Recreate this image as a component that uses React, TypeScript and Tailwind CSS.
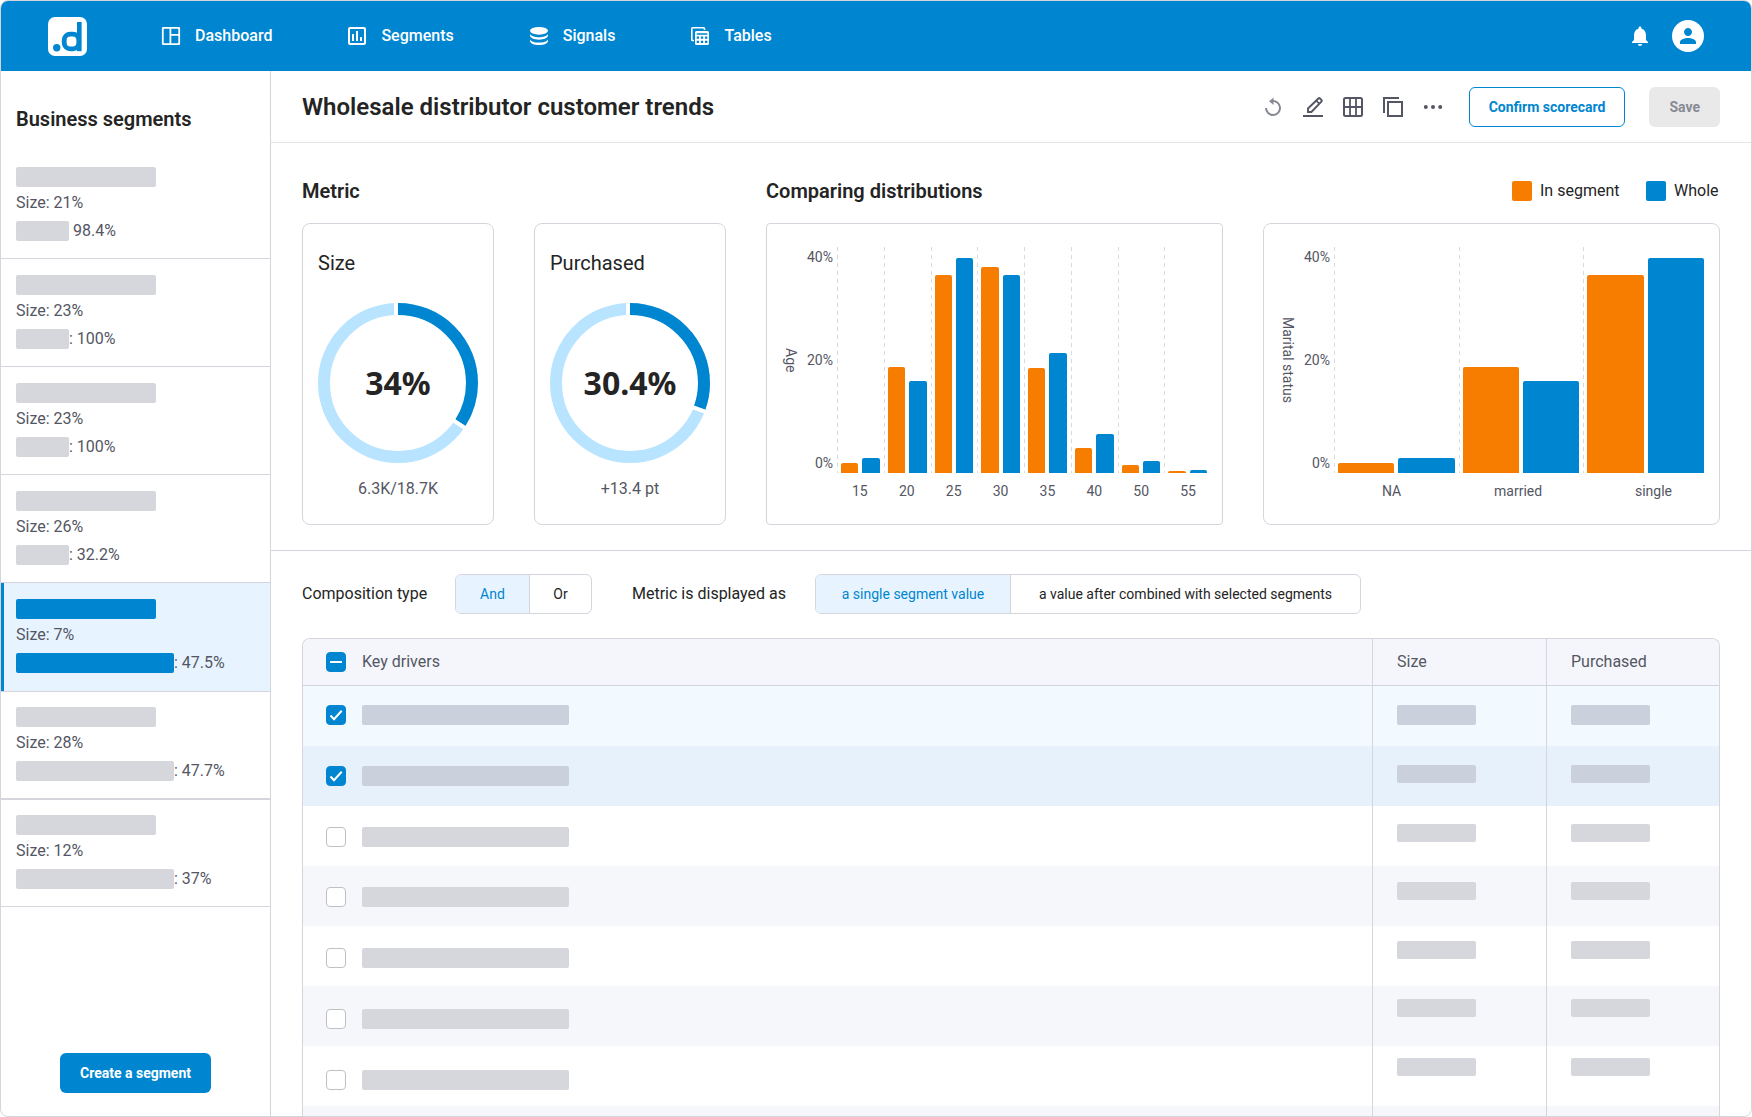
import { useState } from "react";
import type { ReactNode } from "react";
import clsx from "clsx";
import {
  MdNotifications,
  MdOutlineAssessment,
  MdPerson,
} from "react-icons/md";

interface SegmentInterface {
  size: string;
  value: string;
  wide: boolean;
  selected?: boolean;
  divider: string;
}

interface BarInterface {
  label: string;
  segment: number;
  whole: number;
}

interface OptionInterface {
  label: string;
  width: string;
}

interface DriverInterface {
  id: number;
  checked: boolean;
  nameTop: number;
  valueTop: number;
}

const segments: SegmentInterface[] = [
  { size: "21%", value: "98.4%", wide: false, divider: "border-b pt-4" },
  { size: "23%", value: ": 100%", wide: false, divider: "border-b pt-4" },
  { size: "23%", value: ": 100%", wide: false, divider: "border-b pt-4" },
  { size: "26%", value: ": 32.2%", wide: false, divider: "border-b pt-4" },
  { size: "7%", value: ": 47.5%", wide: true, selected: true, divider: "pt-4" },
  { size: "28%", value: ": 47.7%", wide: true, divider: "border-y pt-[15px]" },
  { size: "12%", value: ": 37%", wide: true, divider: "border-y pt-[15px]" },
];

// bar heights in pixels
const ageBars: BarInterface[] = [
  { label: "15", segment: 10, whole: 15 },
  { label: "20", segment: 106, whole: 92 },
  { label: "25", segment: 198, whole: 215 },
  { label: "30", segment: 206, whole: 198 },
  { label: "35", segment: 105, whole: 120 },
  { label: "40", segment: 25, whole: 39 },
  { label: "50", segment: 8, whole: 12 },
  { label: "55", segment: 2, whole: 3 },
];

const maritalBars: BarInterface[] = [
  { label: "NA", segment: 10, whole: 15 },
  { label: "married", segment: 106, whole: 92 },
  { label: "single", segment: 198, whole: 215 },
];

const compositionOptions: OptionInterface[] = [
  { label: "And", width: "w-[74px]" },
  { label: "Or", width: "w-[61px]" },
];

const displayOptions: OptionInterface[] = [
  { label: "a single segment value", width: "w-[195px]" },
  {
    label: "a value after combined with selected segments",
    width: "w-[349px]",
  },
];

const initialDrivers: DriverInterface[] = [
  { id: 1, checked: true, nameTop: 19, valueTop: 19 },
  { id: 2, checked: true, nameTop: 20, valueTop: 19 },
  { id: 3, checked: false, nameTop: 21, valueTop: 18 },
  { id: 4, checked: false, nameTop: 21, valueTop: 16 },
  { id: 5, checked: false, nameTop: 22, valueTop: 15 },
  { id: 6, checked: false, nameTop: 23, valueTop: 13 },
  { id: 7, checked: false, nameTop: 24, valueTop: 12 },
  { id: 8, checked: false, nameTop: 25, valueTop: 11 },
];

const Logo = () => (
  <svg viewBox="0 0 39 39" className="size-[39px]" aria-label="Home">
    <rect width="39" height="39" rx="7" fill="#fff" />
    <circle cx="8.7" cy="30.7" r="3.7" fill="#0086d0" />
    <rect
      x="16.2"
      y="17.2"
      width="14.6"
      height="14.6"
      rx="6"
      fill="none"
      stroke="#0086d0"
      strokeWidth="4.8"
    />
    <rect x="29" y="5" width="4.6" height="29.2" fill="#0086d0" />
  </svg>
);

const DashboardIcon = () => (
  <svg viewBox="0 0 24 24" className="size-6" fill="none" stroke="currentColor">
    <rect x="3.8" y="3.8" width="16.4" height="16.4" rx="0.5" strokeWidth="1.8" />
    <path d="M11.4 4v16M11.4 10.8H20" strokeWidth="1.8" />
  </svg>
);

const SignalsIcon = () => (
  <svg viewBox="0 0 24 24" className="size-6" fill="currentColor">
    <ellipse cx="12" cy="6.8" rx="9" ry="3.9" />
    <path d="M3 10c1 2 4.7 3.200 9 3.200s8-1.200 9-3.200v1.600c0 2.300-4 4.100-9 4.100s-9-1.800-9-4.100z" />
    <path d="M3 15.400c1 2 4.700 3.200 9 3.200s8-1.200 9-3.200V17c0 2.300-4 4.100-9 4.100S3 19.300 3 17z" />
  </svg>
);

const TablesIcon = () => (
  <svg viewBox="0 0 24 24" className="size-6">
    <path
      d="M6 16.500H4.500a.7.7 0 0 1-.7-.7V4.500a.7.7 0 0 1 .7-.7h11.300a.7.7 0 0 1 .7.7V6"
      fill="none"
      stroke="currentColor"
      strokeWidth="1.6"
    />
    <path
      fillRule="evenodd"
      fill="currentColor"
      d="M8.500 7h11A1.500 1.500 0 0 1 21 8.500v11a1.500 1.500 0 0 1-1.500 1.500h-11A1.500 1.500 0 0 1 7 19.500v-11A1.500 1.500 0 0 1 8.500 7zM8.700 9.200v1.500h10.600V9.200zM8.700 12.600v2.200H11v-2.200zM12.800 12.600v2.200h2.400v-2.200zM17 12.600v2.200h2.300v-2.200zM8.700 16.800V19H11v-2.200zM12.800 16.800V19h2.400v-2.200zM17 16.800V19h2.300v-2.200z"
    />
  </svg>
);

const UndoIcon = () => (
  <svg viewBox="0 0 24 24" className="size-6 text-[#878a93]">
    <path
      d="M11 6.100A7 7 0 1 1 5 13"
      fill="none"
      stroke="currentColor"
      strokeWidth="2"
    />
    <path d="M12.500 2.500V10L8 6.200z" fill="currentColor" />
  </svg>
);

const EditIcon = () => (
  <svg viewBox="0 0 24 24" className="size-6" fill="none" stroke="currentColor">
    <path d="M2 21h20" strokeWidth="2" />
    <path
      d="M7 17v-3.500L17.600 3.300a.8.8 0 0 1 1.100 0l1.900 1.900a.8.8 0 0 1 0 1.100L10.400 17z"
      strokeWidth="1.9"
    />
    <path d="M15.200 5.700l3 3" strokeWidth="1.8" />
  </svg>
);

const GridIcon = () => (
  <svg viewBox="0 0 24 24" className="size-6" fill="none" stroke="currentColor">
    <rect x="3" y="3" width="18" height="18" rx="1.5" strokeWidth="2" />
    <path d="M9 3v18M15 3v18M3 12h18" strokeWidth="1.8" />
  </svg>
);

const CopyIcon = () => (
  <svg viewBox="0 0 24 24" className="size-6" fill="none" stroke="currentColor">
    <path d="M3 18V3h15" strokeWidth="2" />
    <rect x="7" y="7" width="14" height="14" strokeWidth="2" />
  </svg>
);

const MoreIcon = () => (
  <svg viewBox="0 0 24 24" className="size-6" fill="currentColor">
    <circle cx="4.8" cy="12" r="2" />
    <circle cx="12" cy="12" r="2" />
    <circle cx="19.2" cy="12" r="2" />
  </svg>
);

const navItems = [
  { label: "Dashboard", icon: <DashboardIcon /> },
  { label: "Segments", icon: <MdOutlineAssessment className="size-6" /> },
  { label: "Signals", icon: <SignalsIcon /> },
  { label: "Tables", icon: <TablesIcon /> },
];

const tools = [
  { label: "Undo", icon: <UndoIcon /> },
  { label: "Edit", icon: <EditIcon /> },
  { label: "Grid", icon: <GridIcon /> },
  { label: "Duplicate", icon: <CopyIcon /> },
  { label: "More", icon: <MoreIcon /> },
];

const Header = () => (
  <header className="flex h-[70px] shrink-0 items-center justify-between bg-[#0086d0] px-[47px] text-white">
    <div className="flex items-center gap-18">
      <a href="#">
        <Logo />
      </a>
      <nav className="flex items-center gap-[73px]">
        {navItems.map((item) => (
          <a
            key={item.label}
            href="#"
            className="flex items-center gap-3 font-medium"
          >
            {item.icon}
            {item.label}
          </a>
        ))}
      </nav>
    </div>
    <div className="flex items-center gap-5">
      <button aria-label="Notifications">
        <MdNotifications className="size-6" />
      </button>
      <button
        aria-label="Account"
        className="flex size-8 items-center justify-center rounded-full bg-white text-[#0086d0]"
      >
        <MdPerson className="size-6" />
      </button>
    </div>
  </header>
);

const Sidebar = () => (
  <aside className="flex w-[270px] shrink-0 flex-col border-r border-[#d5d6dd] pb-[23px]">
    <h2 className="px-[15px] pt-9 pb-5 text-xl/6 font-semibold">
      Business segments
    </h2>
    <ul className="text-[#545663]">
      {segments.map((segment, index) => (
        <li
          key={index}
          className={clsx(
            "h-27 border-[#d5d6dd]",
            segment.divider,
            segment.selected
              ? "border-l-3 border-l-[#0086d0] bg-[#e7f4ff] pl-3"
              : "pl-[15px]"
          )}
        >
          <div
            className={clsx(
              "h-5 w-35 rounded-xs",
              segment.selected ? "bg-[#0086d0]" : "bg-[#d6d7dc]"
            )}
          />
          <p className="mt-1 leading-6">Size: {segment.size}</p>
          <div className="mt-1.5 flex h-5 items-center">
            <div
              className={clsx(
                "h-5 rounded-xs",
                segment.wide ? "w-[158px]" : "w-[53px]",
                segment.selected ? "bg-[#0086d0]" : "bg-[#d6d7dc]"
              )}
            />
            <span className={clsx(index === 0 && "pl-1")}>{segment.value}</span>
          </div>
        </li>
      ))}
    </ul>
    <button className="mx-auto mt-auto h-10 rounded-md bg-[#0086d0] px-5 text-sm font-bold text-white">
      Create a segment
    </button>
  </aside>
);

const Toolbar = () => (
  <div className="flex h-18 shrink-0 items-center justify-between border-b border-[#e5e5e8] px-[31px]">
    <h1 className="text-2xl font-semibold">
      Wholesale distributor customer trends
    </h1>
    <div className="flex items-center gap-6">
      <div className="flex gap-4 text-[#545663]">
        {tools.map((tool) => (
          <button key={tool.label} aria-label={tool.label}>
            {tool.icon}
          </button>
        ))}
      </div>
      <button className="h-10 rounded-md border border-[#0086d0] px-[19px] text-sm font-bold text-[#0086d0]">
        Confirm scorecard
      </button>
      <button
        disabled
        className="h-10 rounded-md bg-[#e9e9ea] px-5 text-sm font-bold text-[#878a93]"
      >
        Save
      </button>
    </div>
  </div>
);

const Ring = ({ percent }: { percent: number }) => {
  const length = 2 * Math.PI * 74;
  return (
    <svg viewBox="0 0 160 160" className="size-40" fill="none">
      <circle cx="80" cy="80" r="74" stroke="#b8e4ff" strokeWidth="12" />
      <circle
        cx="80"
        cy="80"
        r="74"
        stroke="#0086d0"
        strokeWidth="12"
        strokeDasharray={`${(length * percent) / 100} ${length}`}
        transform="rotate(-90 80 80)"
      />
      <rect x="76" y="-1" width="4" height="15" fill="#fff" />
      <rect
        x="80"
        y="-1"
        width="4"
        height="15"
        fill="#fff"
        transform={`rotate(${percent * 3.6} 80 80)`}
      />
    </svg>
  );
};

const MetricCard = ({
  title,
  percent,
  note,
}: {
  title: string;
  percent: number;
  note: string;
}) => (
  <div className="h-[302px] w-48 rounded-lg border border-[#d5d6dd] px-[15px] pt-[27px]">
    <h3 className="text-xl/6">{title}</h3>
    <div className="mt-7 grid place-items-center">
      <div className="[grid-area:1/1]">
        <Ring percent={percent} />
      </div>
      <span className="font-['Noto_Sans',sans-serif] text-[32px]/10 font-bold [grid-area:1/1]">
        {percent}%
      </span>
    </div>
    <p className="mt-3.5 text-center leading-6 text-[#545663]">{note}</p>
  </div>
);

const BarChart = ({
  title,
  bars,
  className,
  labelsClassName,
}: {
  title: string;
  bars: BarInterface[];
  className: string;
  labelsClassName: string;
}) => (
  <div
    className={clsx(
      "h-[302px] flex-1 border border-[#d5d6dd] pt-[23px] pr-[11px] text-sm/5 text-[#545663]",
      className
    )}
  >
    <div className="flex h-[226px]">
      <div className="ml-3.5 flex w-5 items-center justify-center">
        <span className="[writing-mode:vertical-rl]">{title}</span>
      </div>
      <div className="mr-1 flex w-8 flex-col justify-between text-right">
        <span>40%</span>
        <span>20%</span>
        <span>0%</span>
      </div>
      {bars.map((bar) => (
        <div
          key={bar.label}
          className="flex flex-1 items-end gap-1 bg-[linear-gradient(#d9dade_4px,transparent_4px)] bg-[length:1px_8px] bg-repeat-y px-1"
        >
          <div
            className="flex-1 rounded-t-xs bg-[#f77d00]"
            style={{ height: bar.segment }}
          />
          <div
            className="flex-1 rounded-t-xs bg-[#0086d0]"
            style={{ height: bar.whole }}
          />
        </div>
      ))}
    </div>
    <div className={clsx("mt-2 ml-[70px] flex justify-between", labelsClassName)}>
      {bars.map((bar) => (
        <span key={bar.label}>{bar.label}</span>
      ))}
    </div>
  </div>
);

const Metrics = () => (
  <section className="flex shrink-0 gap-10 border-b border-[#d5d6dd] px-[31px] pt-9 pb-[25px]">
    <div>
      <h2 className="text-xl/6 font-semibold">Metric</h2>
      <div className="mt-5 flex gap-10">
        <MetricCard title="Size" percent={34} note="6.3K/18.7K" />
        <MetricCard title="Purchased" percent={30.4} note="+13.4 pt" />
      </div>
    </div>
    <div className="flex-1">
      <div className="flex items-center justify-between">
        <h2 className="text-xl/6 font-semibold">Comparing distributions</h2>
        <div className="flex gap-6 leading-6">
          <span className="flex w-[110px] items-center gap-2">
            <i className="size-5 rounded-xs bg-[#f77d00]" />
            In segment
          </span>
          <span className="flex w-[74px] items-center gap-2">
            <i className="size-5 rounded-xs bg-[#0086d0]" />
            Whole
          </span>
        </div>
      </div>
      <div className="mt-5 flex gap-10">
        <BarChart
          title="Age"
          bars={ageBars}
          className="rounded-sm"
          labelsClassName="px-[15px]"
        />
        <BarChart
          title="Marital status"
          bars={maritalBars}
          className="rounded-lg"
          labelsClassName="pr-9 pl-12"
        />
      </div>
    </div>
  </section>
);

const Toggle = ({
  options,
  label,
}: {
  options: OptionInterface[];
  label: string;
}) => {
  const [active, setActive] = useState<string>(options[0].label);
  return (
    <div
      role="group"
      aria-label={label}
      className="flex h-10 divide-x divide-[#d5d6dd] overflow-hidden rounded-md border border-[#d5d6dd] text-sm"
    >
      {options.map((option) => (
        <button
          key={option.label}
          aria-pressed={active === option.label}
          onClick={() => {
            setActive(option.label);
          }}
          className={clsx(option.width, {
            "bg-[#e7f4ff] text-[#0086d0]": active === option.label,
          })}
        >
          {option.label}
        </button>
      ))}
    </div>
  );
};

const Checkbox = ({
  checked,
  label,
  onChange,
  children,
}: {
  checked: boolean;
  label: string;
  onChange: () => void;
  children: ReactNode;
}) => (
  <span className="grid size-5">
    <input
      type="checkbox"
      aria-label={label}
      checked={checked}
      onChange={onChange}
      className="size-5 appearance-none rounded-sm border border-[#bfc0c6] bg-white [grid-area:1/1] checked:border-[#0086d0] checked:bg-[#0086d0]"
    />
    {checked && (
      <svg
        viewBox="0 0 20 20"
        className="pointer-events-none size-5 [grid-area:1/1]"
        fill="none"
        stroke="#fff"
        strokeWidth="2"
      >
        {children}
      </svg>
    )}
  </span>
);

const Drivers = () => {
  const [drivers, setDrivers] = useState<DriverInterface[]>(initialDrivers);
  const someChecked = drivers.some((driver) => driver.checked);

  const toggle = (id: number) => {
    setDrivers(
      drivers.map((driver) =>
        driver.id === id ? { ...driver, checked: !driver.checked } : driver
      )
    );
  };

  return (
    <div className="overflow-hidden rounded-t-lg border border-b-0 border-[#d5d6dd]">
      <table className="w-full table-fixed border-separate border-spacing-0 text-left">
        <thead className="bg-[#f5f6fb] text-[#545663]">
          <tr className="h-[47px]">
            <th className="border-b border-[#d5d6dd] pl-[23px] font-normal">
              <div className="flex items-center gap-4">
                <Checkbox
                  checked={someChecked}
                  label="Select all"
                  onChange={() => {
                    setDrivers(
                      drivers.map((driver) => ({
                        ...driver,
                        checked: !someChecked,
                      }))
                    );
                  }}
                >
                  <path d="M4 10h12" />
                </Checkbox>
                Key drivers
              </div>
            </th>
            <th className="w-[174px] border-b border-l border-[#d5d6dd] pl-6 font-normal">
              Size
            </th>
            <th className="w-[173px] border-b border-l border-[#d5d6dd] pl-6 font-normal">
              Purchased
            </th>
          </tr>
        </thead>
        <tbody>
          {drivers.map((driver, index) => {
            const even = index % 2 === 1;
            const block = driver.checked ? "bg-[#cbd0dd]" : "bg-[#d6d7dc]";
            return (
              <tr
                key={driver.id}
                className={clsx("h-15 align-top", {
                  "bg-[#f2f9ff]": driver.checked && !even,
                  "bg-[#e7f1fb]": driver.checked && even,
                  "bg-[#f5f7fb]": !driver.checked && even,
                })}
              >
                <td className="pl-[23px]" style={{ paddingTop: driver.nameTop }}>
                  <div className="flex items-center gap-4">
                    <Checkbox
                      checked={driver.checked}
                      label={`Driver ${driver.id}`}
                      onChange={() => {
                        toggle(driver.id);
                      }}
                    >
                      <path d="M4.500 10.500L8 14.200l7.700-8.400" />
                    </Checkbox>
                    <div className={clsx("h-5 w-[207px] rounded-xs", block)} />
                  </div>
                </td>
                {["size", "purchased"].map((column) => (
                  <td
                    key={column}
                    className="border-l border-[#d5d6dd] pl-6"
                    style={{ paddingTop: driver.valueTop }}
                  >
                    <div
                      className={clsx(
                        "w-[79px] rounded-xs",
                        index === 0 ? "h-5" : "h-[18px]",
                        block
                      )}
                    />
                  </td>
                ))}
              </tr>
            );
          })}
        </tbody>
      </table>
    </div>
  );
};

const App = () => {
  return (
    <div className="flex h-screen flex-col overflow-hidden rounded-lg border border-[#d5d6dd] bg-white font-[Roboto,sans-serif] text-base text-[#242424]">
      <Header />
      <div className="flex min-h-0 flex-1">
        <Sidebar />
        <main className="flex min-w-0 flex-1 flex-col overflow-hidden">
          <Toolbar />
          <Metrics />
          <section className="px-[31px] pt-[23px]">
            <div className="mb-6 flex items-center gap-10">
              <div className="flex items-center gap-6">
                <span className="w-[129px]">Composition type</span>
                <Toggle label="Composition type" options={compositionOptions} />
              </div>
              <div className="flex items-center gap-6">
                <span className="w-[159px]">Metric is displayed as</span>
                <Toggle
                  label="Metric is displayed as"
                  options={displayOptions}
                />
              </div>
            </div>
            <Drivers />
          </section>
        </main>
      </div>
    </div>
  );
};

export default App;
